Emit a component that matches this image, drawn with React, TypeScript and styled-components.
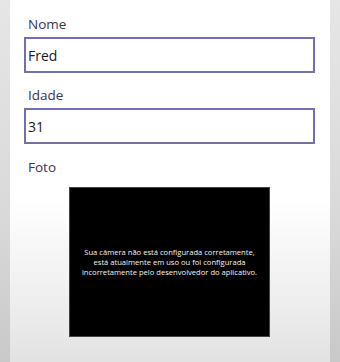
import React from "react";
import styled, { createGlobalStyle } from "styled-components";

const GlobalStyle = createGlobalStyle`
  html, body {
    margin: 0;
    padding: 0;
  }
  body {
    font-family: "Open Sans", "Noto Sans", sans-serif;
  }
`;

const Screen = styled.div`
  width: 340px;
  height: 362px;
  display: flex;
  justify-content: center;
  background: linear-gradient(#e6e6e6, #d9d9d9 60%, #c9c9c9);
  overflow: hidden;
`;

const Panel = styled.div`
  width: 320px;
  height: 100%;
  box-sizing: border-box;
  padding-top: 14px;
  display: flex;
  flex-direction: column;
  background: linear-gradient(#ffffff 0%, #ffffff 55%, #ededed 85%, #e2e2e2 100%);
`;

const Field = styled.div<{ $gap?: number }>`
  display: flex;
  flex-direction: column;
  margin-bottom: ${(p) => p.$gap ?? 12}px;
`;

const Label = styled.div`
  height: 20px;
  line-height: 20px;
  margin-left: 18px;
  margin-bottom: 3px;
  font-size: 13.5px;
  color: #35354f;
`;

const Input = styled.div`
  margin-left: 14px;
  width: 291px;
  height: 36px;
  box-sizing: border-box;
  border: 2px solid #7070ac;
  padding-left: 2px;
  display: flex;
  align-items: center;
  font-size: 14px;
  color: #1a1a1a;
`;

const Camera = styled.div`
  margin-top: 7px;
  margin-left: 59px;
  width: 201px;
  height: 150px;
  background: #000000;
  border: 1px solid #444;
  box-sizing: border-box;
  display: flex;
  align-items: center;
  justify-content: center;
`;

const CameraText = styled.div`
  color: #f4f4f4;
  font-size: 7.6px;
  line-height: 10px;
  text-align: center;
`;

export default function App() {
  return (
    <>
      <GlobalStyle />
      <Screen>
        <Panel>
          <Field>
            <Label>Nome</Label>
            <Input>Fred</Input>
          </Field>
          <Field $gap={13}>
            <Label>Idade</Label>
            <Input>31</Input>
          </Field>
          <Field $gap={0}>
            <Label>Foto</Label>
            <Camera>
              <CameraText>
                Sua câmera não está configurada corretamente,
                <br />
                está atualmente em uso ou foi configurada
                <br />
                incorretamente pelo desenvolvedor do aplicativo.
              </CameraText>
            </Camera>
          </Field>
        </Panel>
      </Screen>
    </>
  );
}
